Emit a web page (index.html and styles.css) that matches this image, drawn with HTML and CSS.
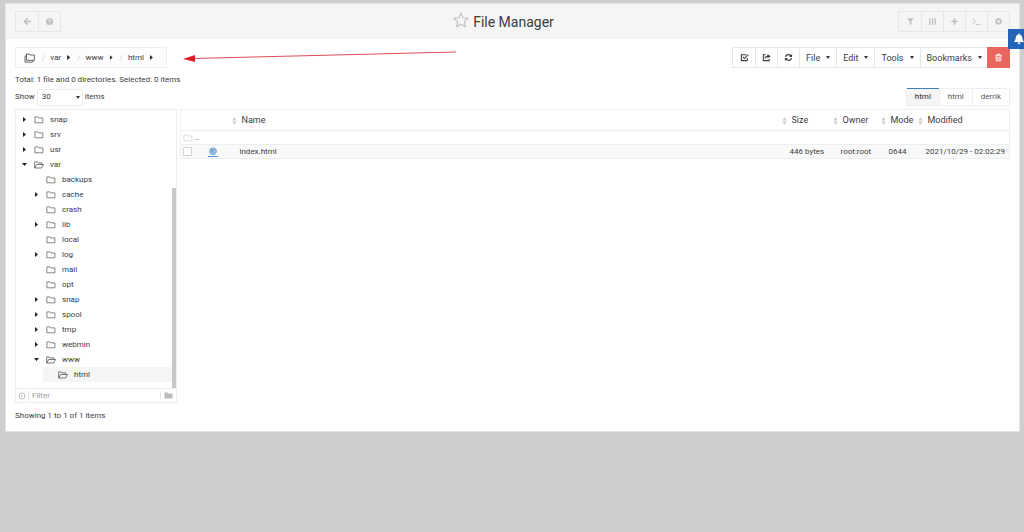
FILE: index.html
```html
<!DOCTYPE html>
<html lang="en">
<head>
<meta charset="utf-8">
<title>File Manager</title>
<link rel="stylesheet" href="styles.css">
</head>
<body>
<svg class="sprite" aria-hidden="true">
  <symbol id="folder" viewBox="0 0 10 8"><path d="M.9 6.8V.9h3l.9 1h4.1v4.9z" fill="none" stroke="currentColor" stroke-width=".7" stroke-linejoin="round"/></symbol>
  <symbol id="open" viewBox="0 0 10 8"><path d="M.7 7V.9h2.6l.8 1h3.7v1.6M.7 7l2-3.5h6.9l-2 3.5z" fill="none" stroke="currentColor" stroke-width=".8" stroke-linejoin="round"/></symbol>
  <symbol id="sort" viewBox="0 0 5 8"><path d="M.3 3.4 2.5.3l2.2 3.1zM.3 4.6l2.2 3.1 2.2-3.1z" fill="#ccc"/></symbol>
</svg>
<main class="panel">
  <header class="header">
    <div class="group muted">
      <button aria-label="Back"><svg class="ico" viewBox="0 0 10 10"><path d="M5.2 1.5 1.7 5l3.5 3.5M2 5h7" fill="none" stroke="currentColor" stroke-width="1.7"/></svg></button>
      <button aria-label="Help"><svg class="ico" viewBox="0 0 10 10"><circle cx="5" cy="5" r="4" fill="currentColor"/><path d="M3.7 4q.1-1.3 1.3-1.3T6.3 3.9Q6.3 4.7 5 5.1v.8M5 6.5v1" fill="none" stroke="#f4f5f5" stroke-width="1"/></svg></button>
    </div>
    <h1 class="title"><svg class="star" viewBox="0 0 16 16"><path d="m8 1 2.1 4.7 5 .6-3.7 3.4 1 5L8 12.2l-4.4 2.5 1-5L.9 6.3l5-.6z" fill="none" stroke="#bfc1c1" stroke-width="1.1" stroke-linejoin="round"/></svg>File Manager</h1>
    <div class="group muted">
      <button aria-label="Filter"><svg class="ico" viewBox="0 0 10 10"><path d="M1.5 1.5h7L5.9 5v4L4.1 7.8V5z" fill="currentColor"/></svg></button>
      <button aria-label="Columns"><svg class="ico" viewBox="0 0 10 10"><path d="M2 1.5v7M5 1.5v7M8 1.5v7" stroke="currentColor" stroke-width="1.5"/></svg></button>
      <button aria-label="Add"><svg class="ico" viewBox="0 0 10 10"><path d="M5 1.5v7M1.5 5h7" stroke="currentColor" stroke-width="1.8"/></svg></button>
      <button aria-label="Terminal"><svg class="ico" viewBox="0 0 10 10"><path d="m.8 2 3 3-3 3M4.5 8.4h5" fill="none" stroke="currentColor"/></svg></button>
      <button aria-label="Settings"><svg class="ico" viewBox="0 0 10 10"><circle cx="5" cy="5" r="2.3" fill="none" stroke="currentColor" stroke-width="1.8"/><path d="M5 1v1M5 8v1M1 5h1M8 5h1M2.2 2.2l.7.7M7.1 7.1l.7.7M2.2 7.8l.7-.7M7.1 2.9l.7-.7" stroke="currentColor" stroke-width="1.4"/></svg></button>
    </div>
  </header>

  <div class="content">
    <div class="bar">
      <nav class="crumbs" aria-label="Path">
        <a href="#root" aria-label="Root"><svg class="home" viewBox="0 0 11 10"><path d="M2.5 7.3V1h2.8l.7 1h4.3v5.3zM2.5 2.7 1 3.2v5.9h7.8l.5-1.7" fill="none" stroke="#555" stroke-width=".9" stroke-linejoin="round"/></svg></a>
        <i>/</i><a href="#var">var</a><b class="tri"></b>
        <i>/</i><a href="#www">www</a><b class="tri"></b>
        <i>/</i><a href="#html">html</a><b class="tri"></b>
      </nav>
      <div class="group tools">
        <button aria-label="Select all"><svg class="ico" viewBox="0 0 10 10"><path d="M8 5.5v3H1.5V2H7M3.2 4.4l1.7 1.8 4.3-4.3" fill="none" stroke="currentColor" stroke-width="1.2"/></svg></button>
        <button aria-label="Share"><svg class="ico" viewBox="0 0 10 10"><path d="M4 2H1.5v6.5H8V6.8M3.5 6q0-2.4 3-2.4" fill="none" stroke="currentColor" stroke-width="1.2"/><path d="M6 1v5l3.5-2.5z" fill="currentColor"/></svg></button>
        <button aria-label="Refresh"><svg class="ico" viewBox="0 0 10 10"><path d="M1.7 4.4Q2.3 1.8 5 1.8q1.7 0 2.7 1.3M8.3 5.6Q7.7 8.2 5 8.2q-1.7 0-2.7-1.3" fill="none" stroke="currentColor" stroke-width="1.3"/><path d="M9 1v3.4H5.6zM1 9V5.6h3.4z" fill="currentColor"/></svg></button>
        <button>File<b class="caret"></b></button>
        <button>Edit<b class="caret"></b></button>
        <button>Tools<b class="caret"></b></button>
        <button>Bookmarks<b class="caret"></b></button>
        <button class="danger" aria-label="Delete"><svg class="ico" viewBox="0 0 10 10"><path d="M1.5 2.5h7M3.7 2.3V1.2h2.6v1.1M2.4 2.7v6h5.2v-6M4.1 4v3.5M5.9 4v3.5" fill="none" stroke="currentColor"/></svg></button>
      </div>
    </div>
    <p class="total">Total: 1 file and 0 directories. Selected: 0 items</p>
    <div class="bar second">
      <label class="show">Show <span class="pick"><select><option>30</option></select><b class="caret"></b></span> items</label>
      <div class="tabs" role="tablist">
        <button role="tab" class="active" aria-selected="true">html</button>
        <button role="tab">html</button>
        <button role="tab">derrik</button>
      </div>
    </div>

    <div class="split">
      <aside class="side">
        <div class="treebox">
          <ul class="tree">
            <li><a href="#snap"><b class="tri"></b><svg><use href="#folder"/></svg>snap</a></li>
            <li><a href="#srv"><b class="tri"></b><svg><use href="#folder"/></svg>srv</a></li>
            <li><a href="#usr"><b class="tri"></b><svg><use href="#folder"/></svg>usr</a></li>
            <li><a href="#var"><b class="tri down"></b><svg><use href="#open"/></svg>var</a>
              <ul>
                <li><a href="#backups"><b class="tri none"></b><svg><use href="#folder"/></svg>backups</a></li>
                <li><a href="#cache"><b class="tri"></b><svg><use href="#folder"/></svg>cache</a></li>
                <li><a href="#crash"><b class="tri none"></b><svg><use href="#folder"/></svg>crash</a></li>
                <li><a href="#lib"><b class="tri"></b><svg><use href="#folder"/></svg>lib</a></li>
                <li><a href="#local"><b class="tri none"></b><svg><use href="#folder"/></svg>local</a></li>
                <li><a href="#log"><b class="tri"></b><svg><use href="#folder"/></svg>log</a></li>
                <li><a href="#mail"><b class="tri none"></b><svg><use href="#folder"/></svg>mail</a></li>
                <li><a href="#opt"><b class="tri none"></b><svg><use href="#folder"/></svg>opt</a></li>
                <li><a href="#vsnap"><b class="tri"></b><svg><use href="#folder"/></svg>snap</a></li>
                <li><a href="#spool"><b class="tri"></b><svg><use href="#folder"/></svg>spool</a></li>
                <li><a href="#tmp"><b class="tri"></b><svg><use href="#folder"/></svg>tmp</a></li>
                <li><a href="#webmin"><b class="tri"></b><svg><use href="#folder"/></svg>webmin</a></li>
                <li><a href="#www"><b class="tri down"></b><svg><use href="#open"/></svg>www</a>
                  <ul><li><a class="current" href="#html"><b class="tri none"></b><svg><use href="#open"/></svg>html</a></li></ul>
                </li>
              </ul>
            </li>
          </ul>
          <div class="track"><div class="thumb"></div></div>
        </div>
        <div class="filter">
          <svg class="clear" viewBox="0 0 8 8"><circle cx="4" cy="4" r="3" fill="none" stroke="#bbb"/><path d="m3 3 2 2M5 3 3 5" stroke="#ccc" stroke-width=".7"/></svg>
          <input type="text" placeholder="Filter" aria-label="Filter">
          <button aria-label="Folders"><svg viewBox="0 0 9 7"><path d="M.5 6.5v-6h3l.8 1h4.2v5z" fill="#bbb"/></svg></button>
        </div>
      </aside>

      <table class="files">
        <colgroup><col class="c-check"><col class="c-icon"><col><col class="c-size"><col class="c-owner"><col class="c-mode"><col class="c-date"></colgroup>
        <thead><tr>
          <th></th><th></th>
          <th><svg><use href="#sort"/></svg>Name</th><th><svg><use href="#sort"/></svg>Size</th><th><svg><use href="#sort"/></svg>Owner</th><th><svg><use href="#sort"/></svg>Mode</th><th><svg><use href="#sort"/></svg>Modified</th>
        </tr></thead>
        <tbody>
          <tr><td colspan="7" class="up"><a href="#up"><svg><use href="#folder"/></svg><span>..</span></a></td></tr>
          <tr class="file">
            <td class="check"><input type="checkbox" aria-label="Select index.html"></td>
            <td class="type"><svg viewBox="0 0 10 10"><circle cx="5" cy="4.3" r="3.4" fill="#a9c6e6" stroke="#6f9fd3" stroke-width=".9"/><path d="M4.2 2.4 3.6 4l1.3.7.4 1.5M6 2.2l.4 1.3" fill="none" stroke="#3f7abd" stroke-width=".9"/><path d="M0 9.5h10" stroke="#5b92cc"/></svg></td>
            <td>index.html</td><td>446 bytes</td><td>root:root</td><td>0644</td><td>2021/10/29 - 02:02:29</td>
          </tr>
        </tbody>
      </table>
    </div>
    <p class="showing">Showing 1 to 1 of 1 items</p>
  </div>
  <svg class="arrow" viewBox="0 0 274 12" aria-hidden="true"><path d="M10 7.5 273 1" stroke="#dd4d55" stroke-width="1"/><path d="M0 8 12 4v7z" fill="#e31b23"/></svg>
</main>
<button class="bell" aria-label="Notifications"><svg viewBox="0 0 12 12"><path d="M6 .5q.8 0 .8.9Q9.3 2 9.3 5q0 2.5 1.9 4H.8q1.9-1.5 1.9-4 0-3 2.5-3.6Q5.2.5 6 .5M4.5 9.6h3Q7.3 11.4 6 11.4T4.5 9.6" fill="#fff"/></svg></button>
</body>
</html>
```
FILE: styles.css
```css
* { box-sizing: border-box; }
body { margin: 0; background: #cdcfce; color: #3c3c3c; font: 8px/12px Roboto, sans-serif; }
button, input, select { font: inherit; color: inherit; margin: 0; padding: 0; border: 0; background: none; }
a { color: inherit; text-decoration: none; }
ul { list-style: none; margin: 0; padding: 0; }
p { margin: 0; }
svg { display: block; flex: none; }
.sprite { position: absolute; width: 0; height: 0; }

.panel { position: relative; margin: 3px 4px 0 5px; background: #fff; border: 1px solid #e3e4e4; }
.header { display: grid; grid-template-columns: 1fr auto 1fr; align-items: center; padding: 7px 9px; background: #f4f5f5; }
.header .group:last-child { justify-self: end; }
.header .group:first-child { justify-self: start; }
.title { display: flex; align-items: center; gap: 4px; margin: 0; padding-right: 18px; font-size: 14px; line-height: 20px; font-weight: 400; }
.star { width: 16px; height: 16px; margin-bottom: 3px; }

.group { display: flex; height: 21px; border: 1px solid #e6e7e7; }
.group button { display: flex; align-items: center; justify-content: center; min-width: 22px; border-left: 1px solid #e6e7e7; }
.group button:first-child { border-left: 0; }
.muted { color: #bfc1c1; }
.ico { width: 9px; height: 9px; }
.tools { font-size: 9px; }
.tools button { padding: 0 6px; }
.tools .danger { margin: -1px; padding: 0 7px; color: #fff; background: #e8665e; border: 0; }
.caret { margin-left: 6px; border: 2px solid transparent; border-top: 3px solid #333; border-bottom: 0; }

.content { padding: 8px 9px 9px; }
.bar { display: flex; justify-content: space-between; align-items: center; }
.crumbs { display: flex; align-items: center; height: 21px; padding: 0 13px 0 8px; border: 1px solid #eee; background: #fdfdfd; }
.crumbs i { margin: 0 5px 0 7px; color: #ccc; font-style: normal; }
.home { width: 11px; height: 10px; }
.tri { width: 3px; height: 5px; background: #222; clip-path: polygon(0 0, 100% 50%, 0 100%); }
.crumbs .tri { margin-left: 6px; }
.total { margin-top: 6px; }
.second { margin-top: 2px; height: 18px; }
.show { display: flex; align-items: center; gap: 2px; }
.pick { position: relative; display: flex; align-items: center; }
.pick select { appearance: none; width: 46px; height: 17px; padding: 0 4px; border: 1px solid #eee; background: #fff; }
.pick .caret { position: absolute; right: 3px; }
.tabs { display: flex; height: 18px; border: 1px solid #eee; border-top: 0; }
.tabs button { padding: 0 8px; border-left: 1px solid #eee; border-top: 1px solid #eee; color: #555; }
.tabs .active { border-left: 0; border-top: 1px solid #3d7fb8; background: #f5f5f5; color: #222; }

.split { display: grid; grid-template-columns: 162px minmax(0, 1fr); gap: 3px; align-items: start; margin-top: 3px; }
.side { border: 1px solid #eee; }
.treebox { display: flex; }
.tree { flex: 1; padding: 2px 0 6px 6px; }
.tree ul { padding-left: 12px; }
.tree a { display: flex; align-items: center; height: 15px; }
.tree svg { width: 10px; height: 8px; margin: 0 6px 0 7px; color: #555; }
.tree .tri { margin: 0 1px; }
.tree .down { width: 5px; height: 3px; margin: 0; clip-path: polygon(0 0, 100% 0, 50% 100%); }
.tree .none { background: none; }
.tree a.current { margin-left: -3px; padding-left: 3px; background: #f4f5f5; }
.track { display: flex; flex-direction: column; justify-content: flex-end; width: 4px; }
.thumb { height: 72%; background: #c8c8c8; }
.filter { display: flex; align-items: center; height: 14px; border-top: 1px solid #eee; }
.clear { width: 8px; height: 8px; margin: 0 2px; }
.filter input { flex: 1; min-width: 0; padding-left: 3px; border-left: 1px solid #e6e6e6; line-height: 10px; outline: 0; }
.filter input::placeholder { color: #999; opacity: 1; }
.filter button { padding: 1px 3px; border-left: 1px solid #e6e6e6; }
.filter button svg { width: 9px; height: 7px; }

.files { width: 100%; table-layout: fixed; border-collapse: collapse; border: 1px solid #f0f0f0; }
.files tr { border-bottom: 1px solid #eee; }
.files th, .files td { padding: 0; text-align: left; font-weight: 400; white-space: nowrap; }
.files th { position: relative; height: 21px; padding-left: 12px; font-size: 9px; }
.files th svg { position: absolute; left: 2px; top: 7px; width: 5px; height: 8px; }
.files td { height: 14px; padding-left: 10px; line-height: 13px; }
.c-check { width: 23px; }
.c-icon { width: 26px; }
.c-size { width: 51px; }
.c-owner { width: 48px; }
.c-mode { width: 37px; }
.c-date { width: 94px; }
.files .up { padding-left: 2px; }
.up a { display: flex; align-items: center; gap: 2px; }
.up svg { width: 10px; height: 8px; color: #ccc; }
.file { background: #f8fafa; }
.files .check { padding-left: 2px; }
.check input { display: block; appearance: none; width: 9px; height: 9px; border: 1px solid #d5d5d5; background: #fff; }
.files .type { padding-left: 4px; }
.type svg { width: 10px; height: 10px; }
.showing { margin-top: 7px; }

.arrow { position: absolute; left: 177px; top: 47px; width: 274px; height: 12px; }
.bell { position: absolute; right: 0; top: 29px; width: 16px; height: 20px; padding-left: 5px; overflow: hidden; background: #2464b8; }
.bell svg { width: 12px; height: 12px; }
```
